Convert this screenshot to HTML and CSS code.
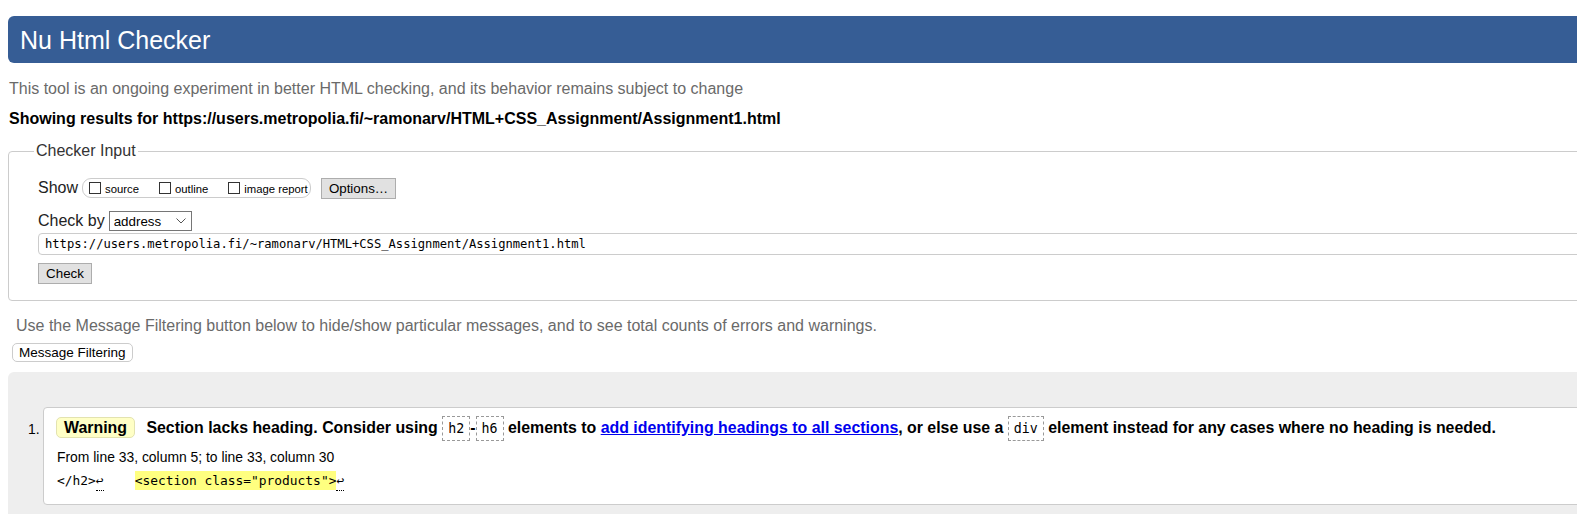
FILE: index.html
```html
<!DOCTYPE html>
<html lang="en">
<head>
<meta charset="utf-8">
<title>Nu Html Checker</title>
<link rel="stylesheet" href="styles.css">
</head>
<body>
<div class="page">
  <h1 class="topbar">Nu Html Checker</h1>
  <p class="intro">This tool is an ongoing experiment in better HTML checking, and its behavior remains subject to change</p>
  <p class="showing">Showing results for https://users.metropolia.fi/~ramonarv/HTML+CSS_Assignment/Assignment1.html</p>

  <fieldset class="checker">
    <legend>Checker Input</legend>
    <div class="row">
      <span class="row-label">Show</span>
      <span class="opts">
        <label class="opt"><input type="checkbox">source</label>
        <label class="opt"><input type="checkbox">outline</label>
        <label class="opt"><input type="checkbox">image report</label>
      </span>
      <button class="btn options-btn" type="button">Options…</button>
    </div>
    <div class="row row-checkby">
      <span class="row-label">Check by</span>
      <span class="select-wrap">
        <select class="select"><option>address</option></select>
        <svg class="chev" width="10" height="6" viewBox="0 0 10 6"><path d="M0.5 0.5 L5 5 L9.5 0.5" fill="none" stroke="#555" stroke-width="1"/></svg>
      </span>
    </div>
    <input class="url" type="text" value="https://users.metropolia.fi/~ramonarv/HTML+CSS_Assignment/Assignment1.html">
    <div class="check-row"><button class="btn" type="button">Check</button></div>
  </fieldset>

  <p class="note">Use the Message Filtering button below to hide/show particular messages, and to see total counts of errors and warnings.</p>
  <button class="filter-btn" type="button">Message Filtering</button>

  <div class="results-area">
    <ol class="messages">
      <li class="msg">
        <span class="num">1.</span>
        <div class="msg-box">
          <p class="msg-line"><strong class="badge">Warning</strong> <span class="msg-text">Section lacks heading. Consider using <code class="c">h2</code>-<code class="c">h6</code> elements to <a href="#" class="link">add identifying headings to all sections</a>, or else use a <code class="c">div</code> element instead for any cases where no heading is needed.</span></p>
          <p class="location">From line 33, column 5; to line 33, column 30</p>
          <p class="extract"><code>&lt;/h2&gt;<span class="lf">↩</span>    <mark class="hl">&lt;section class="products"&gt;</mark><span class="lf">↩</span></code></p>
        </div>
      </li>
    </ol>
  </div>
</div>
</body>
</html>
```

FILE: styles.css
```css
html {
  overflow: hidden;
}

body {
  margin: 0;
  font-family: "Liberation Sans", Arial, sans-serif;
  font-size: 16px;
  color: #000;
  background: #fff;
}

.page {
  width: 1640px;
  padding: 16px 0 0 8px;
}

.topbar {
  margin: 0;
  box-sizing: border-box;
  height: 47px;
  line-height: 45px;
  padding: 2px 0 0 12px;
  background: #365d95;
  color: #fff;
  font-size: 25px;
  font-weight: normal;
  border-radius: 6px;
}

.intro {
  margin: 17px 0 0 1px;
  line-height: 18px;
  color: #6a6a6a;
}

.showing {
  margin: 12px 0 0 1px;
  line-height: 18px;
  font-weight: bold;
}

.checker {
  margin: 14px 0 0 0;
  border: 1px solid #ccc;
  border-radius: 4px;
  padding: 18px 0 16px 29px;
  min-width: 0;
}

.checker legend {
  padding: 0 2px;
  margin-left: -4px;
  line-height: 18px;
  color: #333;
  font-size: 16px;
}

.row {
  display: flex;
  align-items: center;
  height: 20px;
}

.row-label {
  font-size: 16px;
  color: #222;
}

.opts {
  display: flex;
  align-items: center;
  box-sizing: border-box;
  height: 20px;
  width: 229px;
  margin-left: 4px;
  padding: 0 6px;
  border: 1px solid #ccc;
  border-radius: 9px;
  gap: 20px;
}

.opt {
  display: flex;
  align-items: center;
  gap: 4px;
  font-size: 11.3px;
  line-height: 12px;
  padding-top: 2px;
  white-space: nowrap;
}

.opt input {
  appearance: none;
  -webkit-appearance: none;
  margin: 0;
  width: 12px;
  height: 12px;
  border: 1px solid #333;
  background: #fff;
  position: relative;
  top: -1px;
}

.btn {
  box-sizing: border-box;
  height: 21px;
  padding: 0 6px;
  background: #e1e1e1;
  border: 1px solid #adadad;
  border-radius: 0;
  font-family: "Liberation Sans", Arial, sans-serif;
  font-size: 13.33px;
  color: #000;
}

.options-btn {
  margin-left: 10px;
  width: 75px;
}

.row-checkby {
  margin-top: 13px;
}

.select-wrap {
  position: relative;
  margin-left: 4px;
  display: inline-block;
  height: 20px;
}

.select {
  appearance: none;
  -webkit-appearance: none;
  box-sizing: border-box;
  width: 83px;
  height: 20px;
  margin: 0;
  padding: 0 0 0 4px;
  border: 1px solid #767676;
  border-radius: 0;
  background: #fff;
  font-family: "Liberation Sans", Arial, sans-serif;
  font-size: 13.33px;
  color: #000;
}

.chev {
  position: absolute;
  right: 6px;
  top: 7px;
  pointer-events: none;
}

.url {
  display: block;
  box-sizing: border-box;
  width: 100%;
  height: 22px;
  margin: 2px 0 0 0;
  padding: 0 6px;
  border: 1px solid #ccc;
  border-radius: 4px;
  font-family: "DejaVu Sans Mono", "Liberation Mono", monospace;
  font-size: 12.15px;
  color: #000;
  background: #fff;
}

.check-row {
  margin-top: 8px;
}

.check-row .btn {
  width: 54px;
}

.note {
  margin: 16px 0 0 8px;
  line-height: 18px;
  color: #6a6a6a;
}

.filter-btn {
  box-sizing: border-box;
  margin: 8px 0 0 4px;
  height: 19px;
  padding: 0 6px;
  background: #fff;
  border: 1px solid #ccc;
  border-radius: 5px;
  font-family: "Liberation Sans", Arial, sans-serif;
  font-size: 13.5px;
  color: #000;
  display: block;
}

.results-area {
  margin-top: 10px;
  background: #eee;
  border-radius: 6px 0 0 0;
  padding: 35px 0 30px 20px;
}

.messages {
  list-style: none;
  margin: 0;
  padding: 0;
}

.msg {
  display: flex;
}

.num {
  width: 15px;
  font-size: 13.9px;
  padding-top: 14px;
  line-height: 16px;
}

.msg-box {
  flex: 1;
  background: #fff;
  border: 1px solid #ccc;
  border-radius: 4px;
  padding: 7px 12px 14px 12px;
}

.msg-line {
  margin: 0;
  line-height: 26px;
  font-weight: bold;
  white-space: nowrap;
  font-size: 15.9px;
}

.badge {
  display: inline-block;
  box-sizing: border-box;
  height: 21px;
  line-height: 19px;
  padding: 0 7px;
  margin-right: 7px;
  background: #ffffc6;
  border: 1px solid #e3e3b0;
  border-radius: 5px;
  vertical-align: 0;
}

.c {
  font-family: "DejaVu Sans Mono", "Liberation Mono", monospace;
  font-size: 13.3px;
  font-weight: normal;
  border: 1px dashed #999;
  padding: 4px 5px;
}

.link {
  color: #00e;
  text-decoration: underline;
}

.location {
  margin: 6px 0 0 1px;
  font-size: 13.9px;
  line-height: 18px;
}

.extract {
  margin: 4px 0 0 1px;
  line-height: 19px;
  white-space: pre;
}

.extract code {
  font-family: "DejaVu Sans Mono", "Liberation Mono", monospace;
  font-size: 12.9px;
}

.lf {
  border-bottom: 1px dotted #000;
  padding-bottom: 2px;
}

.hl {
  background: #ffff80;
  color: #000;
  padding: 2px 0;
}
```
